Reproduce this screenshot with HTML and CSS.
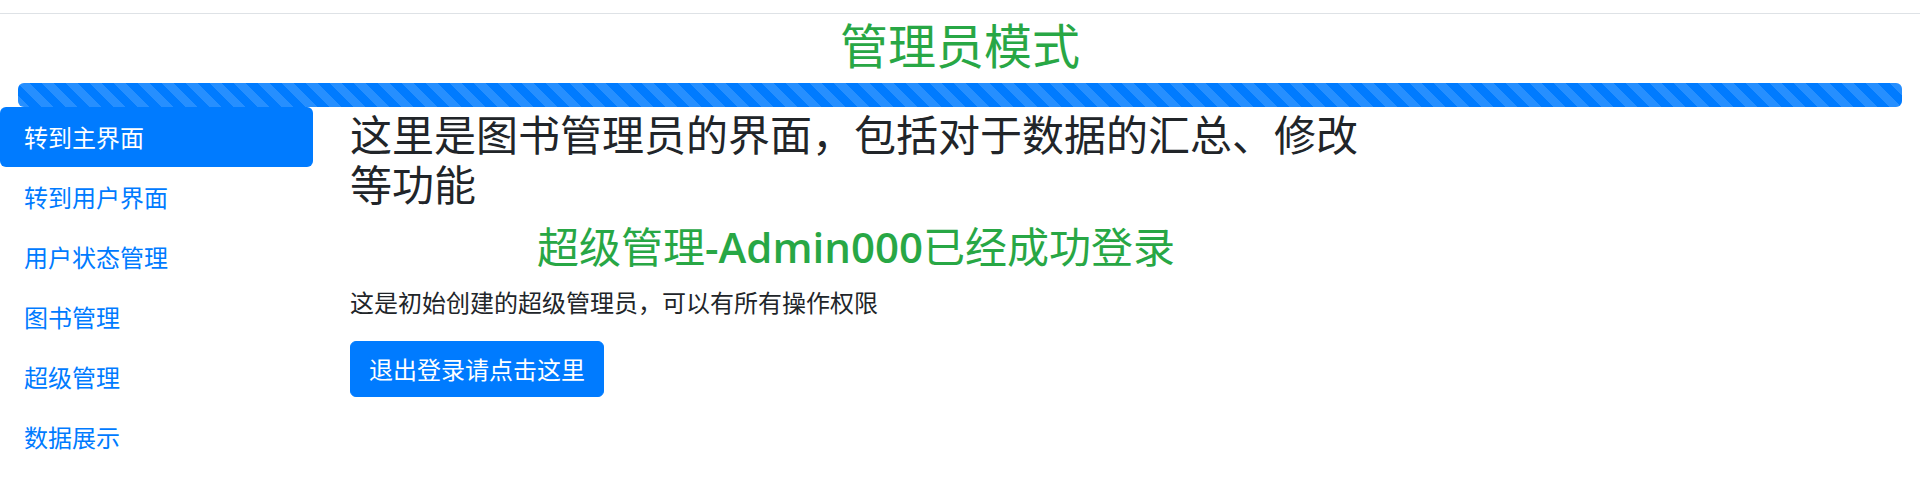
FILE: index.html
```html
<!DOCTYPE html>
<html lang="zh-CN">
<head>
<meta charset="utf-8">
<title>管理员模式</title>
<link rel="stylesheet" href="styles.css">
</head>
<body>
<div class="topline"></div>
<h2 class="title">管理员模式</h2>
<div class="progress"><div class="progress-bar"></div></div>
<div class="layout">
  <nav class="nav">
    <a class="nav-link active" href="#">转到主界面</a>
    <a class="nav-link" href="#">转到用户界面</a>
    <a class="nav-link" href="#">用户状态管理</a>
    <a class="nav-link" href="#">图书管理</a>
    <a class="nav-link" href="#">超级管理</a>
    <a class="nav-link" href="#">数据展示</a>
  </nav>
  <main class="main">
    <h3 class="heading">这里是图书管理员的界面，包括对于数据的汇总、修改等功能</h3>
    <h3 class="status">超级管理<span class="latin">-Admin000</span>已经成功登录</h3>
    <p class="desc">这是初始创建的超级管理员，可以有所有操作权限</p>
    <button class="btn" type="button">退出登录请点击这里</button>
  </main>
</div>
</body>
</html>
```
FILE: styles.css
```css
* { box-sizing: border-box; }
body {
  margin: 0;
  background: #fff;
  font-family: "Noto Sans CJK SC", "Noto Sans", sans-serif;
  color: #212529;
}
.topline {
  height: 14px;
  border-bottom: 1px solid #dee2e6;
}
.title {
  margin: 0;
  font-size: 48px;
  line-height: 58px;
  font-weight: 400;
  color: #28a745;
  text-align: center;
}
.progress {
  margin: 11px 18px 0;
  height: 24px;
  border-radius: 6px;
  overflow: hidden;
  background: #e9ecef;
}
.progress-bar {
  height: 100%;
  width: 100%;
  background-color: #007bff;
  background-image: linear-gradient(45deg, rgba(255,255,255,.15) 25%, transparent 25%, transparent 50%, rgba(255,255,255,.15) 50%, rgba(255,255,255,.15) 75%, transparent 75%, transparent);
  background-size: 24px 24px;
}
.layout {
  display: flex;
  gap: 37px;
}
.nav {
  width: 313px;
  display: flex;
  flex-direction: column;
}
.nav-link {
  display: block;
  padding: 12px 24px;
  font-size: 24px;
  line-height: 36px;
  color: #007bff;
  text-decoration: none;
  border-radius: 6px;
}
.nav-link.active {
  background: #007bff;
  color: #fff;
}
.main {
  width: 1012px;
  padding-top: 1px;
}
.heading {
  margin: 0 0 12px;
  font-size: 42px;
  line-height: 50px;
  font-weight: 400;
  color: #212529;
}
.status {
  margin: 0 0 12px;
  font-size: 42px;
  line-height: 50px;
  font-weight: 400;
  color: #28a745;
  text-align: center;
}
.latin {
  font-family: "Open Sans", "Noto Sans", sans-serif;
  font-weight: 600;
}
.desc {
  margin: 0 0 21px;
  font-size: 24px;
  line-height: 36px;
}
.btn {
  font-family: inherit;
  background: #007bff;
  color: #fff;
  border: 1px solid #007bff;
  border-radius: 6px;
  padding: 9px 18px;
  font-size: 24px;
  line-height: 36px;
  cursor: pointer;
}
```
